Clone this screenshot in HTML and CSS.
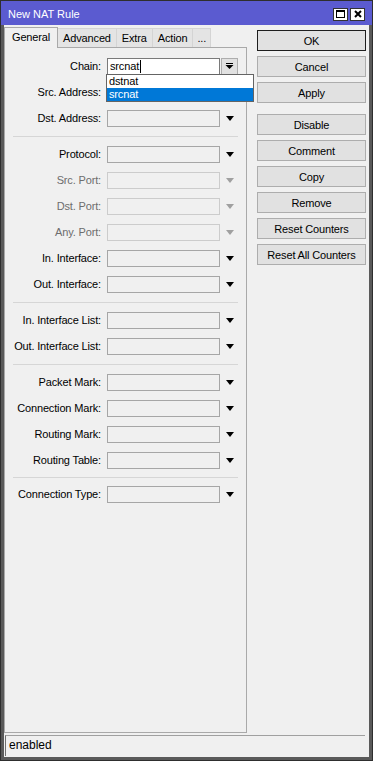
FILE: index.html
```html
<!DOCTYPE html>
<html lang="en">
  <head>
    <meta charset="UTF-8" />
    <meta name="viewport" content="width=device-width, initial-scale=1.0" />
    <title>New NAT Rule</title>
    <link rel="stylesheet" href="styles.css">
  </head>
  <body>
    <div class="window">
      <div class="titlebar">
        <span class="title">New NAT Rule</span>
        <div class="title-buttons">
          <span class="tbtn">
            <svg width="9" height="8" viewBox="0 0 9 8"><rect x="0.5" y="0.5" width="8" height="7" fill="none" stroke="#000"/><rect x="0" y="0" width="9" height="2" fill="#000"/></svg>
          </span>
          <span class="tbtn">
            <svg width="8" height="8" viewBox="0 0 8 8"><path d="M1 1 L7 7 M7 1 L1 7" stroke="#000" stroke-width="2"/></svg>
          </span>
        </div>
      </div>

      <div class="client">
        <div class="main">
          <div class="left">
            <div class="tabs">
              <div class="tab active">General</div>
              <div class="tab">Advanced</div>
              <div class="tab">Extra</div>
              <div class="tab">Action</div>
              <div class="tab more">...</div>
            </div>

            <div class="panel">
              <div class="row">
                <label class="label">Chain:</label>
                <div class="field edit">
                  <span>srcnat</span><span class="caret"></span>
                  <div class="dropdown">
                    <div class="opt">dstnat</div>
                    <div class="opt sel">srcnat</div>
                  </div>
                </div>
                <span class="dd-btn">
                  <svg width="9" height="7" viewBox="0 0 9 7"><rect x="1" y="0" width="7" height="1" fill="#000"/><polygon points="0.5,2 8.5,2 4.5,6" fill="#000"/></svg>
                </span>
              </div>
              <div class="row">
                <label class="label">Src. Address:</label>
                <div class="field"></div>
                <span class="arrow"></span>
              </div>
              <div class="row">
                <label class="label">Dst. Address:</label>
                <div class="field"></div>
                <span class="arrow"></span>
              </div>

              <div class="sep"></div>

              <div class="row">
                <label class="label">Protocol:</label>
                <div class="field"></div>
                <span class="arrow"></span>
              </div>
              <div class="row disabled">
                <label class="label">Src. Port:</label>
                <div class="field"></div>
                <span class="arrow"></span>
              </div>
              <div class="row disabled">
                <label class="label">Dst. Port:</label>
                <div class="field"></div>
                <span class="arrow"></span>
              </div>
              <div class="row disabled">
                <label class="label">Any. Port:</label>
                <div class="field"></div>
                <span class="arrow"></span>
              </div>
              <div class="row">
                <label class="label">In. Interface:</label>
                <div class="field"></div>
                <span class="arrow"></span>
              </div>
              <div class="row">
                <label class="label">Out. Interface:</label>
                <div class="field"></div>
                <span class="arrow"></span>
              </div>

              <div class="sep"></div>

              <div class="row">
                <label class="label">In. Interface List:</label>
                <div class="field"></div>
                <span class="arrow"></span>
              </div>
              <div class="row">
                <label class="label">Out. Interface List:</label>
                <div class="field"></div>
                <span class="arrow"></span>
              </div>

              <div class="sep"></div>

              <div class="row">
                <label class="label">Packet Mark:</label>
                <div class="field"></div>
                <span class="arrow"></span>
              </div>
              <div class="row">
                <label class="label">Connection Mark:</label>
                <div class="field"></div>
                <span class="arrow"></span>
              </div>
              <div class="row">
                <label class="label">Routing Mark:</label>
                <div class="field"></div>
                <span class="arrow"></span>
              </div>
              <div class="row">
                <label class="label">Routing Table:</label>
                <div class="field"></div>
                <span class="arrow"></span>
              </div>

              <div class="sep short"></div>

              <div class="row">
                <label class="label">Connection Type:</label>
                <div class="field"></div>
                <span class="arrow"></span>
              </div>
            </div>
          </div>

          <div class="actions">
            <button class="btn default">OK</button>
            <button class="btn">Cancel</button>
            <button class="btn spaced">Apply</button>
            <button class="btn">Disable</button>
            <button class="btn">Comment</button>
            <button class="btn">Copy</button>
            <button class="btn">Remove</button>
            <button class="btn">Reset Counters</button>
            <button class="btn">Reset All Counters</button>
          </div>
        </div>

        <div class="status">enabled</div>
      </div>
    </div>
  </body>
</html>
```

FILE: styles.css
```css
body {
  margin: 0;
  padding: 0;
  font-family: "Liberation Sans", Arial, sans-serif;
  font-size: 11px;
  letter-spacing: -0.15px;
  color: #000;
  background: #f0f0f0;
}

.window {
  width: 373px;
  height: 761px;
  box-sizing: border-box;
  border: 1px solid #2e2e2e;
  background: #5a5a5a;
  display: flex;
  flex-direction: column;
}

.titlebar {
  height: 24px;
  flex-shrink: 0;
  background: #5b5bd0;
  display: flex;
  align-items: center;
  padding: 0 7px 0 7px;
}

.title {
  flex: 1;
  color: #fff;
  font-size: 11px;
  letter-spacing: 0;
  padding-top: 1px;
}

.title-buttons {
  display: flex;
  gap: 2px;
  padding-top: 2px;
}

.tbtn {
  width: 13px;
  height: 11px;
  background: #fff;
  border: 1px solid #333;
  display: flex;
  align-items: center;
  justify-content: center;
}

.client {
  flex: 1;
  margin: 0 3px 3px 3px;
  background: #f0f0f0;
  display: flex;
  flex-direction: column;
  min-height: 0;
}

.main {
  flex: 1;
  display: flex;
  padding-top: 2px;
  min-height: 0;
}

.left {
  width: 243px;
  display: flex;
  flex-direction: column;
}

/* tabs */
.tabs {
  height: 21px;
  display: flex;
  align-items: flex-end;
  position: relative;
  z-index: 1;
}

.tab {
  height: 18px;
  line-height: 18px;
  padding: 0 5px;
  margin-bottom: 1px;
  border: 1px solid #d4d4d4;
  border-bottom: none;
  border-left: none;
  background: #e4e4e4;
}

.tab.more {
  padding: 0 4px;
}

.tab.active {
  height: 20px;
  line-height: 19px;
  padding: 0 7px;
  margin-bottom: 0;
  border-left: 1px solid #a9a9a9;
  border-color: #a9a9a9;
  background: #f0f0f0;
}

.panel {
  flex: 1;
  margin-top: -1px;
  border: 1px solid #a9a9a9;
  background: #f0f0f0;
  padding-top: 5px;
}

/* form rows */
.row {
  height: 26px;
  display: flex;
  align-items: center;
}

.label {
  width: 96px;
  text-align: right;
  margin-right: 6px;
  white-space: nowrap;
}

.field {
  width: 113px;
  height: 17px;
  box-sizing: border-box;
  border: 1px solid #a6a6a6;
  background: #f0f0f0;
  position: relative;
}

.field.edit {
  background: #fff;
  border-color: #7a7a7a;
  padding-left: 2px;
  line-height: 15px;
  display: flex;
  align-items: center;
}

.caret {
  width: 1px;
  height: 13px;
  background: #000;
  margin-left: 1px;
}

.dropdown {
  position: absolute;
  top: 15px;
  left: -2px;
  width: 146px;
  border: 1px solid #646464;
  background: #fff;
  z-index: 2;
}

.opt {
  height: 13px;
  line-height: 13px;
  padding-left: 2px;
}

.opt.sel {
  background: #0078d7;
  color: #fff;
}

.dd-btn {
  width: 17px;
  height: 17px;
  box-sizing: border-box;
  margin-left: 1px;
  border: 1px solid #adadad;
  background: #e1e1e1;
  display: flex;
  align-items: center;
  justify-content: center;
}

.arrow {
  width: 18px;
  display: flex;
  justify-content: center;
}

.arrow::before {
  content: "";
  border-left: 4.5px solid transparent;
  border-right: 4.5px solid transparent;
  border-top: 5px solid #000;
  margin-left: 1px;
}

.disabled .label {
  color: #6d6d6d;
}

.disabled .field {
  border-color: #cccccc;
}

.disabled .arrow::before {
  border-top-color: #a0a0a0;
}

.sep {
  height: 10px;
  margin: 0 8px 0 8px;
  display: flex;
  align-items: center;
}

.sep::before {
  content: "";
  flex: 1;
  border-top: 1px solid #d6d6d6;
}

.sep.short {
  height: 8px;
}

/* right buttons */
.actions {
  width: 109px;
  margin-left: 10px;
  padding-top: 3px;
  display: flex;
  flex-direction: column;
  gap: 5px;
}

.btn {
  height: 21px;
  box-sizing: border-box;
  padding: 0;
  border: 1px solid #adadad;
  background: #e1e1e1;
  font-family: "Liberation Sans", Arial, sans-serif;
  font-size: 11px;
  letter-spacing: -0.15px;
  color: #000;
}

.btn.default {
  border-color: #1e1e1e;
}

.btn.spaced {
  margin-bottom: 6px;
}

.status {
  height: 21px;
  box-sizing: border-box;
  margin: 2px 4px 1px 1px;
  border-top: 1px solid #a0a0a0;
  border-left: 1px solid #6e6e6e;
  padding-left: 3px;
  line-height: 19px;
  font-size: 12px;
  letter-spacing: 0;
}
```
